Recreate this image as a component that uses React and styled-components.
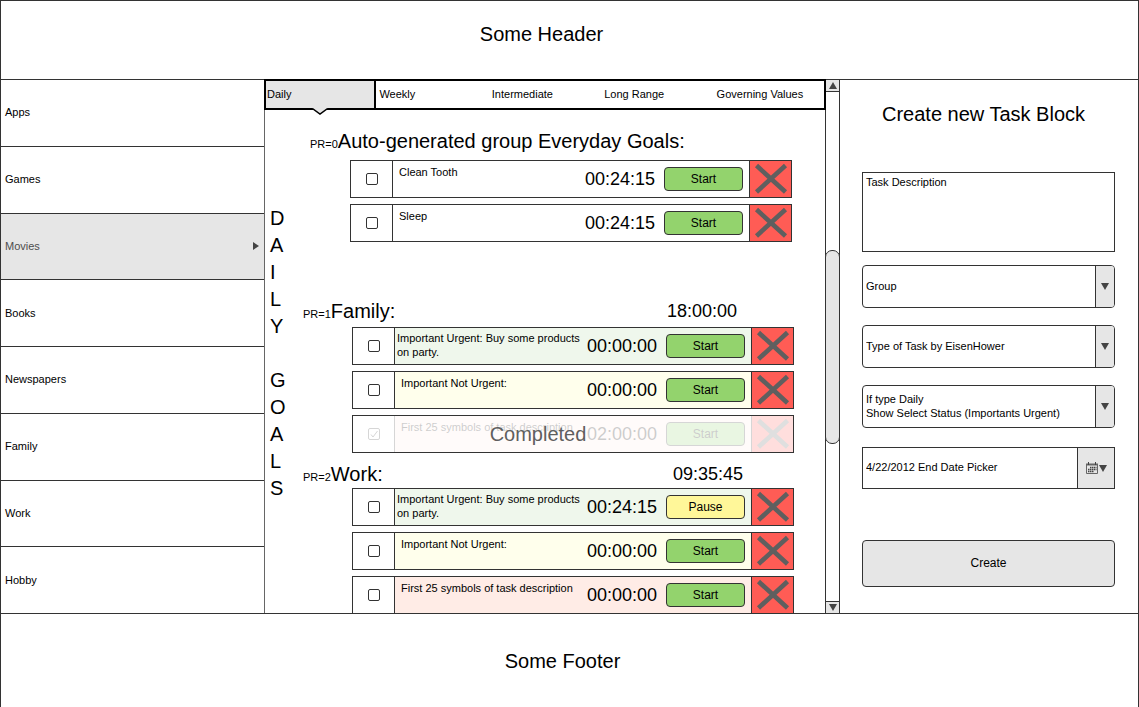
import React from "react";
import styled, { createGlobalStyle } from "styled-components";

const line = "#333333";
const grey = "#e6e6e6";

const GlobalStyle = createGlobalStyle`
  *, *::before, *::after { box-sizing: border-box; }
  body {
    margin: 0;
    background: #ffffff;
    color: #000000;
    font: 11px/14px "Liberation Sans", Arial, sans-serif;
  }
  button, input, select, textarea { font: inherit; color: inherit; margin: 0; }
  h1, h2, p, ul { margin: 0; padding: 0; }
`;

const Page = styled.div`
  display: flex;
  flex-direction: column;
  min-height: 100vh;
  border: 1px solid ${line};
  border-bottom: 0;
`;

const Header = styled.header`
  display: flex;
  align-items: center;
  justify-content: center;
  height: 79px;
  padding: 0 56px 12px 0;
  border-bottom: 1px solid ${line};
`;

const Footer = styled.footer`
  display: flex;
  flex: 1;
  align-items: center;
  justify-content: center;
  min-height: 93px;
  padding-right: 14px;
  border-top: 1px solid ${line};
  font-size: 20px;
  line-height: 24px;
`;

const PageTitle = styled.h1`
  font-size: 20px;
  line-height: 24px;
  font-weight: normal;
`;

const Body = styled.div`
  display: grid;
  grid-template-columns: 264px minmax(500px, 1fr) 15px 298px;
`;

const Sidebar = styled.nav`
  display: flex;
  flex-direction: column;
  margin-bottom: -1px;
  border-right: 1px solid #666666;
`;

const SideLink = styled.a`
  display: flex;
  flex: 1;
  align-items: center;
  justify-content: space-between;
  padding: 0 5px 1px 4px;
  border-bottom: 1px solid ${line};
  text-decoration: none;
  color: ${(p) => (p.$active ? "#4d4d4d" : "#000000")};
  background: ${(p) => (p.$active ? grey : "transparent")};
`;

const Main = styled.main`
  display: flex;
  flex-direction: column;
`;

const Tabs = styled.div`
  position: relative;
  display: grid;
  grid-template-columns: repeat(5, 1fr);
  height: 31px;
  margin: -1px -1px 0;
  box-shadow: inset 0 0 0 2px #000000;
  z-index: 1;
`;

const Tab = styled.button`
  position: relative;
  padding: 0 0 2px 3px;
  border: 0;
  background: ${(p) => (p.$active ? grey : "transparent")};
  box-shadow: ${(p) => (p.$active ? "inset 0 0 0 2px #000000" : "none")};
  text-align: left;
`;

const Notch = styled.svg`
  position: absolute;
  left: 50%;
  top: 100%;
  transform: translate(-50%, -3px);
`;

const Board = styled.div`
  display: flex;
  margin-bottom: -1px;
`;

const Vertical = styled.div`
  display: flex;
  flex-direction: column;
  width: 38px;
  padding: 95px 0 0 5px;
  font-size: 20px;
  line-height: 27px;
`;

const Letter = styled.span`
  display: block;
  height: 27px;
`;

const Groups = styled.div`
  flex: 1;
  padding: 19px 31px 0 0;
`;

const Group = styled.section`
  margin-top: ${(p) => p.$before}px;
  padding: ${(p) => (p.$shifted ? "0 2px 0 7px" : "0")};
`;

const GroupHead = styled.div`
  display: flex;
  align-items: baseline;
  height: 24px;
  margin-bottom: ${(p) => p.$after}px;
  padding-right: ${(p) => p.$end}px;
`;

const GroupTitle = styled.h2`
  flex: 1;
  font-size: 20px;
  line-height: 24px;
  font-weight: normal;
`;

const Time = styled.time`
  font-size: 18px;
  line-height: 24px;
`;

const TotalTime = styled(Time)`
  align-self: flex-start;
`;

const TaskList = styled.ul`
  display: flex;
  flex-direction: column;
  gap: 6px;
  margin-left: ${(p) => (p.$shifted ? 40 : 49)}px;
  list-style: none;
`;

const tones = { plain: "#ffffff", green: "#eff7ec", yellow: "#ffffec", red: "#ffece6" };

const TaskRow = styled.li`
  position: relative;
  height: 38px;
  border: 1px solid ${line};
  background: ${(p) => tones[p.$tone]};
`;

const TaskCells = styled.div`
  display: grid;
  grid-template-columns: 42px 1fr 70px 94px 42px;
  align-items: center;
  height: 100%;
`;

const CheckCell = styled.label`
  display: flex;
  align-items: center;
  justify-content: center;
  height: 100%;
  border-right: 1px solid ${line};
  background: #ffffff;
`;

const CheckBox = styled.input`
  grid-area: 1 / 1;
  appearance: none;
  width: 12px;
  height: 12px;
  border: 1px solid ${line};
  border-radius: 2px;
  background: #ffffff;
`;

const CheckStack = styled.span`
  display: grid;
  place-items: center;
`;

const CheckMark = styled.svg`
  grid-area: 1 / 1;
  z-index: 1;
  pointer-events: none;
`;

const TaskText = styled.p`
  align-self: start;
  padding: ${(p) => (p.$long ? "3px 6px 0 2px" : "4px 0 0 6px")};
`;

const TaskButton = styled.button`
  justify-self: end;
  width: 79px;
  height: 24px;
  margin-right: 6px;
  padding: 0;
  border: 1px solid ${line};
  border-radius: 4px;
  background: ${(p) => (p.$paused ? "#fff799" : "#93d36d")};
  font-size: 12px;
  line-height: 14px;
`;

const DeleteButton = styled.button`
  display: flex;
  align-items: center;
  justify-content: center;
  height: 100%;
  padding: 0;
  border: 0;
  border-left: 1px solid ${line};
  background: #ff5c55;
`;

const Veil = styled.div`
  position: absolute;
  inset: 0;
  display: flex;
  align-items: center;
  justify-content: center;
  padding-right: 70px;
  background: rgba(255, 255, 255, 0.8);
  color: #5f5f5f;
  font-size: 20px;
  line-height: 24px;
  z-index: 2;
`;

const Scroll = styled.div`
  display: grid;
  grid-template-rows: 12px 158fr 194px 158fr 12px;
  margin-bottom: -1px;
  border: solid ${line};
  border-width: 0 1px 1px;
`;

const ScrollButton = styled.button`
  display: flex;
  grid-row: ${(p) => (p.$down ? 5 : 1)};
  align-items: center;
  justify-content: center;
  padding: 0;
  border: solid ${line};
  border-width: ${(p) => (p.$down ? "1px 0 0" : "0 0 1px")};
  background: ${grey};
`;

const Thumb = styled.div`
  grid-row: 3;
  margin: 0 -1px;
  border: 1px solid ${line};
  border-radius: 7px;
  background: ${grey};
`;

const Panel = styled.form`
  display: flex;
  flex-direction: column;
  padding: 22px 23px 26px 22px;
`;

const PanelTitle = styled.h2`
  margin-bottom: 46px;
  padding-right: 10px;
  font-size: 20px;
  line-height: 24px;
  font-weight: normal;
  text-align: center;
`;

const Description = styled.textarea`
  height: 80px;
  margin-bottom: 13px;
  padding: 2px 3px;
  border: 1px solid ${line};
  border-radius: 0;
  resize: none;
`;

const SelectBox = styled.div`
  display: grid;
  height: 43px;
  margin-bottom: 17px;
  overflow: hidden;
  border: 1px solid ${line};
  border-radius: 4px;
  & > * { grid-area: 1 / 1; }
`;

const Select = styled.select`
  appearance: none;
  width: 100%;
  height: 100%;
  padding: ${(p) => (p.$captioned ? "12px 20px 0 3px" : "0 20px 2px 3px")};
  border: 0;
  background: transparent;
`;

const Caption = styled.label`
  align-self: start;
  padding: 6px 0 0 3px;
`;

const Drop = styled.span`
  display: flex;
  align-items: center;
  justify-content: center;
  justify-self: end;
  width: 19px;
  border-left: 1px solid ${line};
  background: ${grey};
  pointer-events: none;
`;

const DateBox = styled.div`
  display: flex;
  height: 42px;
  margin: 2px 0 51px;
  border: 1px solid ${line};
`;

const DateInput = styled.input`
  flex: 1;
  min-width: 0;
  padding: 0 3px 2px;
  border: 0;
  background: transparent;
`;

const DateButton = styled.button`
  display: flex;
  align-items: center;
  justify-content: center;
  gap: 1px;
  width: 37px;
  padding: 0;
  border: 0;
  border-left: 1px solid ${line};
  background: ${grey};
`;

const Create = styled.button`
  height: 47px;
  padding: 0 0 2px;
  border: 1px solid ${line};
  border-radius: 4px;
  background: ${grey};
  font-size: 12px;
`;

const Triangle = ({ dir = "down" }) => {
  const d = { down: "M0 0H8L4 7Z", up: "M0 7H8L4 0Z", right: "M0 0V8L6 4Z" }[dir];
  return (
    <svg width={dir === "right" ? 6 : 8} height={dir === "right" ? 8 : 7} aria-hidden="true">
      <path d={d} fill="#444444" />
    </svg>
  );
};

const Cross = () => (
  <svg width="34" height="32" viewBox="0 0 34 32" aria-hidden="true">
    <path d="M2.5 2.5L31.5 29M31.5 2.5L2.5 29" stroke="#5f5f5f" strokeWidth="4.6" />
  </svg>
);

const Calendar = () => (
  <svg width="12" height="12" viewBox="0 0 12 12" aria-hidden="true">
    <path d="M.5 2V11.5H11.5V2" fill="none" stroke="#666666" />
    <path d="M0 1.5H12V3.5H0Z" fill="#666666" />
    <path d="M2.5 0V3M9.5 0V3" stroke="#444444" />
    <path d="M4 5.5H10.5M2 7.5H10.5M2 9.5H8" stroke="#444444" strokeWidth="1.3" strokeDasharray="1.5 .5" />
  </svg>
);

const categories = ["Apps", "Games", "Movies", "Books", "Newspapers", "Family", "Work", "Hobby"];
const tabs = ["Daily", "Weekly", "Intermediate", "Long Range", "Governing Values"];

const urgent = "Important Urgent: Buy some products on party.";
const groups = [
  {
    rank: "PR=0", title: "Auto-generated group Everyday Goals:", before: 0, after: 7, shifted: true,
    tasks: [
      { text: "Clean Tooth", time: "00:24:15", tone: "plain" },
      { text: "Sleep", time: "00:24:15", tone: "plain" },
    ],
  },
  {
    rank: "PR=1", title: "Family:", total: "18:00:00", before: 57, after: 4, end: 57,
    tasks: [
      { text: urgent, long: true, time: "00:00:00", tone: "green" },
      { text: "Important Not Urgent:", time: "00:00:00", tone: "yellow" },
      { text: "First 25 symbols of task description", time: "02:00:00", tone: "red", done: true },
    ],
  },
  {
    rank: "PR=2", title: "Work:", total: "09:35:45", before: 9, after: 2, end: 51,
    tasks: [
      { text: urgent, long: true, time: "00:24:15", tone: "green", running: true },
      { text: "Important Not Urgent:", time: "00:00:00", tone: "yellow" },
      { text: "First 25 symbols of task description", time: "00:00:00", tone: "red" },
    ],
  },
];

const Task = ({ task }) => (
  <TaskRow $tone={task.tone}>
    <TaskCells>
      <CheckCell>
        <CheckStack>
          <CheckBox type="checkbox" defaultChecked={task.done} aria-label={task.text} />
          {task.done && (
            <CheckMark width="10" height="10" viewBox="0 0 10 10" aria-hidden="true">
              <path d="M2 5.5L4 8L8.5 2" fill="none" stroke={line} />
            </CheckMark>
          )}
        </CheckStack>
      </CheckCell>
      <TaskText $long={task.long}>{task.text}</TaskText>
      <Time>{task.time}</Time>
      <TaskButton type="button" $paused={task.running}>
        {task.running ? "Pause" : "Start"}
      </TaskButton>
      <DeleteButton type="button" aria-label="Delete task"><Cross /></DeleteButton>
    </TaskCells>
    {task.done && <Veil>Completed</Veil>}
  </TaskRow>
);

export default function App() {
  return (
    <>
      <GlobalStyle />
      <Page>
        <Header><PageTitle>Some Header</PageTitle></Header>
        <Body>
          <Sidebar>
            {categories.map((name) => (
              <SideLink key={name} href="#" $active={name === "Movies"}>
                {name}
                {name === "Movies" && <Triangle dir="right" />}
              </SideLink>
            ))}
          </Sidebar>
          <Main>
            <Tabs>
              {tabs.map((name, i) => (
                <Tab key={name} type="button" $active={i === 0}>
                  {name}
                  {i === 0 && (
                    <Notch width="18" height="9" viewBox="0 0 18 9" aria-hidden="true">
                      <path d="M1 0V1L9 7L17 1V0Z" fill={grey} />
                      <path d="M0 2H2L9 7L16 2H18" fill="none" stroke="#000000" strokeWidth="1.5" />
                    </Notch>
                  )}
                </Tab>
              ))}
            </Tabs>
            <Board>
              <Vertical>
                {[..."DAILY GOALS"].map((c, i) => <Letter key={i}>{c}</Letter>)}
              </Vertical>
              <Groups>
                {groups.map((g) => (
                  <Group key={g.rank} $before={g.before} $shifted={g.shifted}>
                    <GroupHead $after={g.after} $end={g.end || 0}>
                      <span>{g.rank}</span>
                      <GroupTitle>{g.title}</GroupTitle>
                      {g.total && <TotalTime>{g.total}</TotalTime>}
                    </GroupHead>
                    <TaskList $shifted={g.shifted}>
                      {g.tasks.map((t, i) => <Task key={i} task={t} />)}
                    </TaskList>
                  </Group>
                ))}
              </Groups>
            </Board>
          </Main>
          <Scroll>
            <ScrollButton type="button" aria-label="Scroll up"><Triangle dir="up" /></ScrollButton>
            <Thumb />
            <ScrollButton type="button" aria-label="Scroll down" $down><Triangle /></ScrollButton>
          </Scroll>
          <Panel>
            <PanelTitle>Create new Task Block</PanelTitle>
            <Description aria-label="Task Description" defaultValue="Task Description" />
            <SelectBox>
              <Select aria-label="Group"><option>Group</option></Select>
              <Drop><Triangle /></Drop>
            </SelectBox>
            <SelectBox>
              <Select aria-label="Type of Task"><option>Type of Task by EisenHower</option></Select>
              <Drop><Triangle /></Drop>
            </SelectBox>
            <SelectBox>
              <Caption htmlFor="status">If type Daily</Caption>
              <Select id="status" $captioned><option>Show Select Status (Importants Urgent)</option></Select>
              <Drop><Triangle /></Drop>
            </SelectBox>
            <DateBox>
              <DateInput aria-label="End date" defaultValue="4/22/2012 End Date Picker" />
              <DateButton type="button" aria-label="Pick a date"><Calendar /><Triangle /></DateButton>
            </DateBox>
            <Create type="button">Create</Create>
          </Panel>
        </Body>
        <Footer>Some Footer</Footer>
      </Page>
    </>
  );
}
